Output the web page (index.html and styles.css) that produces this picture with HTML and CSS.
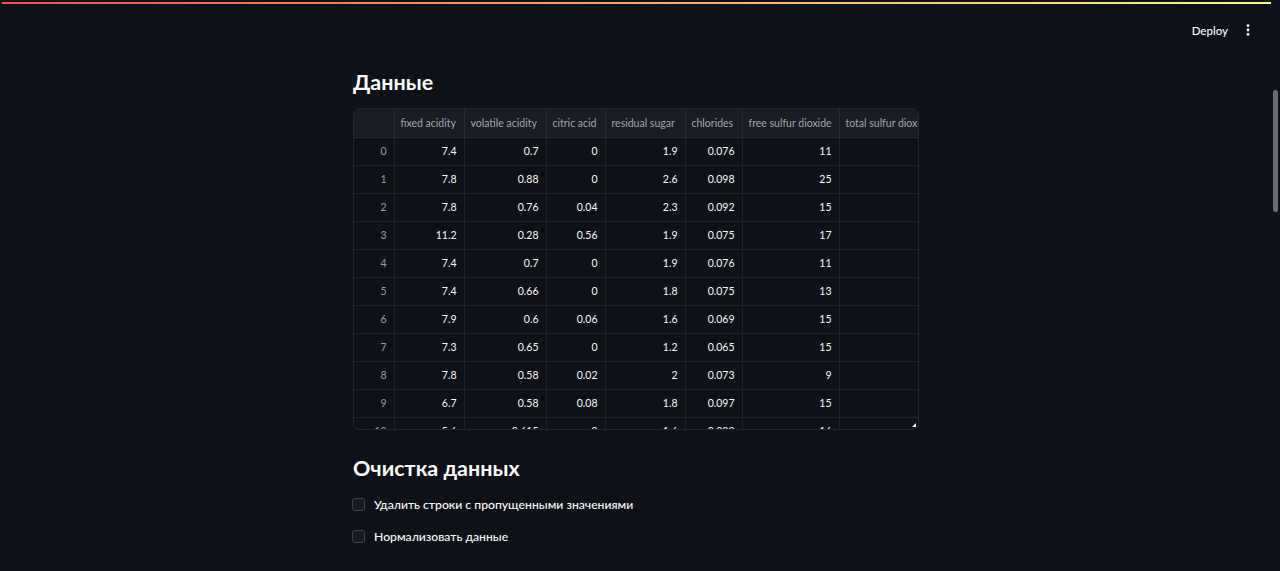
FILE: index.html
```html
<!DOCTYPE html>
<html lang="ru">
<head>
<meta charset="utf-8">
<title>Данные</title>
<link rel="stylesheet" href="styles.css">
</head>
<body>
<div class="app">
  <div class="decor"></div>
  <header class="toolbar">
    <span class="deploy">Deploy</span>
    <span class="kebab" aria-label="menu">
      <svg width="4" height="12" viewBox="0 0 4 12"><circle cx="2" cy="1.6" r="1.4" fill="#fafafa"/><circle cx="2" cy="6" r="1.4" fill="#fafafa"/><circle cx="2" cy="10.4" r="1.4" fill="#fafafa"/></svg>
    </span>
  </header>
  <main class="main">
    <h3 class="title">Данные</h3>
    <div class="grid-wrap">
      <table class="grid">
        <colgroup>
          <col style="width:40px"><col style="width:70px"><col style="width:82px"><col style="width:59px"><col style="width:80px"><col style="width:57px"><col style="width:97px"><col style="width:110px">
        </colgroup>
        <thead>
          <tr><th></th><th>fixed acidity</th><th>volatile acidity</th><th>citric acid</th><th>residual sugar</th><th>chlorides</th><th>free sulfur dioxide</th><th>total sulfur dioxide</th></tr>
        </thead>
        <tbody>
          <tr><td class="idx">0</td><td>7.4</td><td>0.7</td><td>0</td><td>1.9</td><td>0.076</td><td>11</td><td></td></tr>
          <tr><td class="idx">1</td><td>7.8</td><td>0.88</td><td>0</td><td>2.6</td><td>0.098</td><td>25</td><td></td></tr>
          <tr><td class="idx">2</td><td>7.8</td><td>0.76</td><td>0.04</td><td>2.3</td><td>0.092</td><td>15</td><td></td></tr>
          <tr><td class="idx">3</td><td>11.2</td><td>0.28</td><td>0.56</td><td>1.9</td><td>0.075</td><td>17</td><td></td></tr>
          <tr><td class="idx">4</td><td>7.4</td><td>0.7</td><td>0</td><td>1.9</td><td>0.076</td><td>11</td><td></td></tr>
          <tr><td class="idx">5</td><td>7.4</td><td>0.66</td><td>0</td><td>1.8</td><td>0.075</td><td>13</td><td></td></tr>
          <tr><td class="idx">6</td><td>7.9</td><td>0.6</td><td>0.06</td><td>1.6</td><td>0.069</td><td>15</td><td></td></tr>
          <tr><td class="idx">7</td><td>7.3</td><td>0.65</td><td>0</td><td>1.2</td><td>0.065</td><td>15</td><td></td></tr>
          <tr><td class="idx">8</td><td>7.8</td><td>0.58</td><td>0.02</td><td>2</td><td>0.073</td><td>9</td><td></td></tr>
          <tr><td class="idx">9</td><td>6.7</td><td>0.58</td><td>0.08</td><td>1.8</td><td>0.097</td><td>15</td><td></td></tr>
          <tr><td class="idx">10</td><td>5.6</td><td>0.615</td><td>0</td><td>1.6</td><td>0.089</td><td>16</td><td></td></tr>
        </tbody>
      </table>
      <span class="resize"></span>
    </div>
    <h3 class="title title-2">Очистка данных</h3>
    <label class="check"><span class="box"></span><span>Удалить строки с пропущенными значениями</span></label>
    <label class="check"><span class="box"></span><span>Нормализовать данные</span></label>
  </main>
  <div class="scrollbar"><div class="thumb"></div></div>
</div>
</body>
</html>
```

FILE: styles.css
```css
* { box-sizing: border-box; }
html, body { margin: 0; padding: 0; }
body {
  background: #0e1117;
  color: #fafafa;
  font-family: "Source Sans Pro", Lato, "Noto Sans", sans-serif;
  height: 571px;
  overflow: hidden;
}
.app {
  position: relative;
  height: 571px;
  padding-right: 8px;
}
.decor {
  margin: 2px 1px 0 2px;
  height: 2px;
  background: linear-gradient(90deg, #ff4b4b, #fffd80);
}
.toolbar {
  height: 54px;
  display: flex;
  align-items: center;
  justify-content: flex-end;
  gap: 16px;
  padding-right: 20px;
  padding-bottom: 2px;
}
.deploy {
  font-size: 11.5px;
  font-weight: 500;
  color: #fafafa;
}
.kebab { display: flex; align-items: center; padding: 0 2px; }
.main {
  width: 566px;
  margin: 0 auto;
}
.title {
  margin: 0;
  font-size: 21.5px;
  font-weight: 700;
  line-height: 28px;
  padding-top: 10px;
  height: 50px;
}
.grid-wrap {
  position: relative;
  height: 322px;
  border: 1px solid #22252d;
  border-radius: 6px;
  overflow: hidden;
}
.grid {
  border-collapse: collapse;
  table-layout: fixed;
  width: 595px;
  font-size: 10.5px;
}
.grid th {
  height: 28px;
  background: #1a1c24;
  color: #a3a8b4;
  font-weight: 400;
  text-align: left;
  padding: 0 7px 0 6px;
  border-right: 1px solid #262932;
  border-bottom: 1px solid #262932;
  white-space: nowrap;
  overflow: hidden;
}
.grid td {
  height: 28px;
  padding: 0 7px;
  text-align: right;
  color: #fafafa;
  border-right: 1px solid #1f2229;
  border-bottom: 1px solid #1f2229;
  white-space: nowrap;
  overflow: hidden;
}
.grid td.idx { color: #9a9ea8; }
.resize {
  position: absolute;
  right: 2px;
  bottom: 2px;
  width: 0;
  height: 0;
  border-left: 4px solid transparent;
  border-bottom: 4px solid #fafafa;
}
.title-2 {
  padding-top: 24px;
  height: 58px;
}
.check {
  display: flex;
  align-items: center;
  gap: 9px;
  height: 32px;
  font-size: 12.2px;
  font-weight: 500;
  color: #fafafa;
}
.box {
  width: 13px;
  height: 13px;
  border: 1px solid #3f4350;
  background: #171a22;
  border-radius: 3px;
  flex: none;
  margin-left: -1px;
}
.scrollbar {
  position: absolute;
  top: 0;
  right: 0;
  width: 8px;
  height: 571px;
}
.thumb {
  position: absolute;
  top: 88px;
  left: 1px;
  width: 5px;
  height: 122px;
  border-radius: 3px;
  background: #6b6c70;
}
```
